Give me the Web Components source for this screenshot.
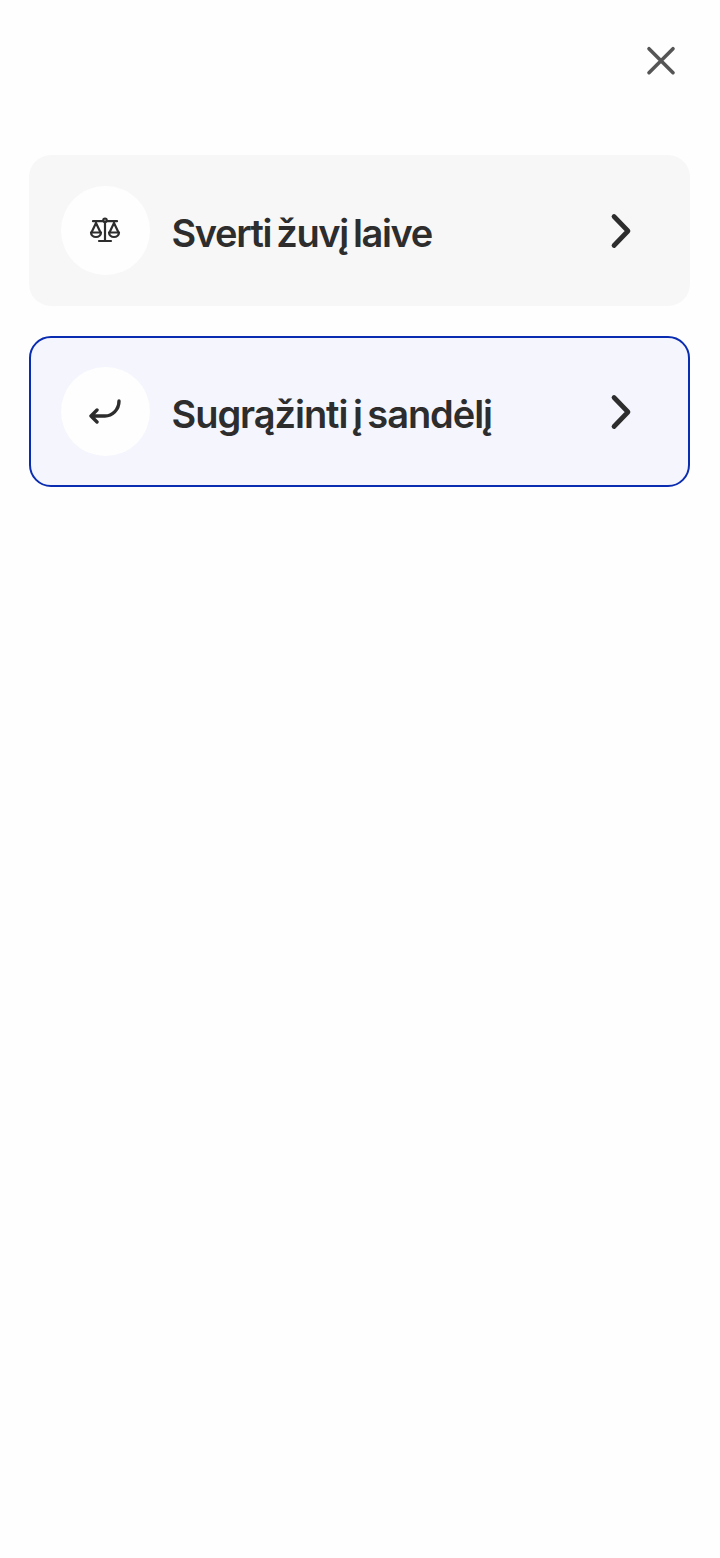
<!DOCTYPE html>
<html lang="lt"><head><meta charset="utf-8"><style>
html,body{margin:0;padding:0;background:#fefefe}
body{width:720px;height:1558px;overflow:hidden;font-family:Inter,"Liberation Sans",sans-serif}
</style></head><body>
<action-sheet>
<choice-card label="Sverti žuvį laive" icon="scale" tracking="-1.38"></choice-card>
<choice-card label="Sugrąžinti į sandėlį" icon="return" tracking="-1.05" selected></choice-card>
</action-sheet>
<script>
class ActionSheet extends HTMLElement{constructor(){super();this.attachShadow({mode:'open'}).innerHTML=`<style>
:host{display:block;padding:30px 30px 0 30px}
header{display:flex;justify-content:flex-end;height:125px}
svg{display:block;width:60px;height:60px}
main{display:flex;flex-direction:column;gap:30px;margin-left:-1px}
</style><header><svg viewBox="0 0 60 60" fill="none" stroke="#555" stroke-width="3.600" stroke-linecap="round"><path d="M19 18.700L43 42.700M43 18.700L19 42.700"/></svg></header><main><slot></slot></main>`}}
const icons={scale:`<svg viewBox="0 0 32 32" width="32" height="32" fill="none" stroke="#2d2d2d" stroke-width="2.200" stroke-linecap="round" stroke-linejoin="round"><circle cx="16" cy="5.200" r="1.700"/><path d="M16 7V26M10 26H22M4 6.200H14.300M17.700 6.200H28M7 8L2.500 17.500M7 8L11.500 17.500M25 8L20.500 17.500M25 8L29.500 17.500"/><path d="M2 17.500H12A5 4.500 0 0 1 2 17.500ZM20 17.500H30A5 4.500 0 0 1 20 17.500Z"/></svg>`,
return:`<svg viewBox="0 0 32 32" width="32" height="32" fill="none" stroke="#2d2d2d" stroke-width="3.400" stroke-linecap="round" stroke-linejoin="round"><path d="M30 5C30 14 23 20 16 20H2M8 14L2 20L8 26"/></svg>`};
class ChoiceCard extends HTMLElement{connectedCallback(){const sel=this.hasAttribute('selected');this.attachShadow({mode:'open'}).innerHTML=`<style>
:host{display:block}
.c{box-sizing:border-box;height:151px;border-radius:22px;background:${sel?'#f4f5fd':'#f7f7f7'};border:${sel?'2px solid #0a2cb0':'2px solid transparent'};display:flex;align-items:center;padding:0 56px 0 30px}
.i{width:88.500px;height:89px;border-radius:50%;background:#fefefe;display:flex;align-items:center;justify-content:center;flex:none}
.t{flex:1;margin-left:22px;font:600 38px/46px Inter,"Liberation Sans",sans-serif;letter-spacing:${this.getAttribute('tracking')}px;word-spacing:-3px;color:#2d2d2d;white-space:nowrap;padding-top:5px}
.a{display:block;flex:none;width:22px;height:36px}
</style><div class="c"><div class="i">${icons[this.getAttribute('icon')]}</div><div class="t">${this.getAttribute('label')}</div><svg class="a" viewBox="0 0 22 36" fill="none" stroke="#2d2d2d" stroke-width="4.700" stroke-linecap="round" stroke-linejoin="round"><path d="M4 3.500L18 18L4 32.500"/></svg></div>`}}
customElements.define('action-sheet',ActionSheet);customElements.define('choice-card',ChoiceCard);
</script></body></html>
